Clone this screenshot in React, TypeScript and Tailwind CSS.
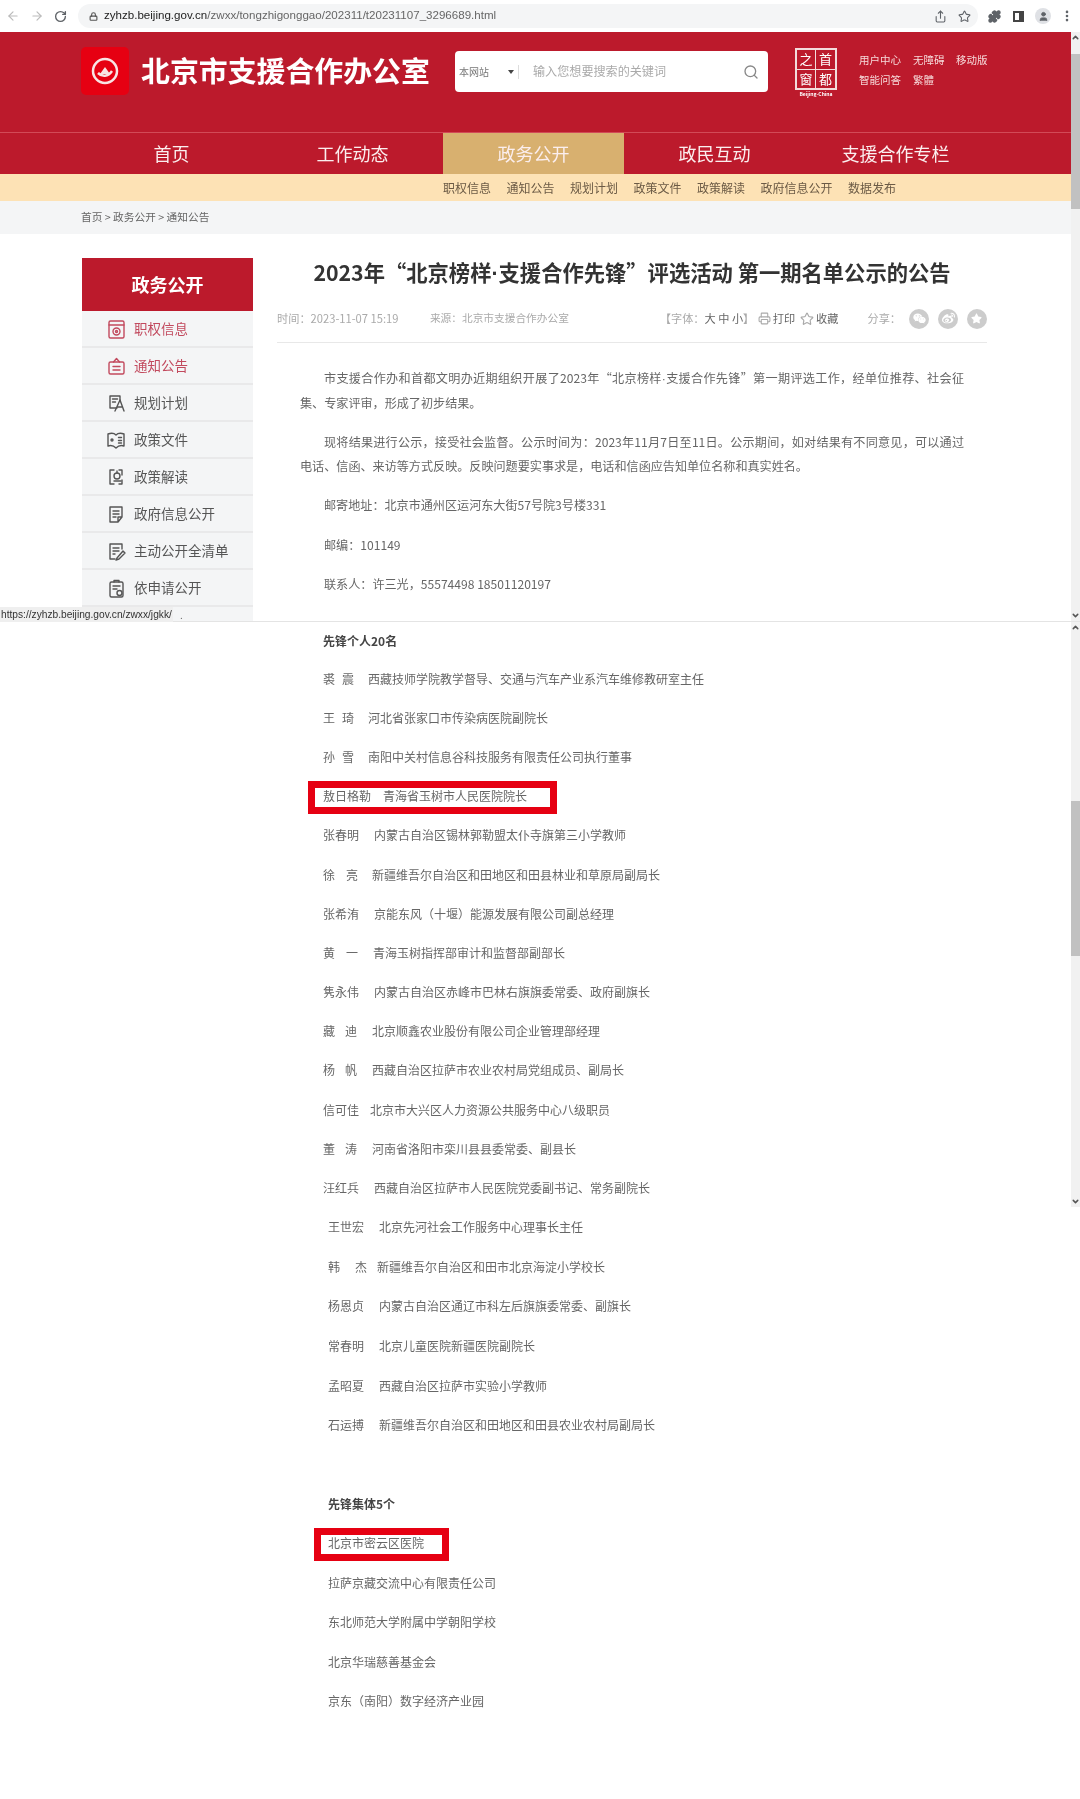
import React from "react";
import { ArrowLeft, ArrowRight, RotateCw, Lock, Share, Star, Puzzle, User, MoreVertical, Search, Printer, ChevronUp, ChevronDown } from "lucide-react";
import { FaWeixin, FaWeibo, FaStar } from "react-icons/fa";

const nav = ["首页", "工作动态", "政务公开", "政民互动", "支援合作专栏"];
const sub = ["职权信息", "通知公告", "规划计划", "政策文件", "政策解读", "政府信息公开", "数据发布"];

const Ico = ({ k }: { k: number }) => {
  const p = { fill: "none", stroke: "currentColor", strokeWidth: 1.4, strokeLinejoin: "round" as const, strokeLinecap: "round" as const };
  return (
    <svg width="20" height="20" viewBox="0 0 20 20" {...p}>
      {k === 0 && (<><rect x="3" y="2" width="15" height="17" rx="1.5" /><path d="M3 6h15" /><circle cx="10.5" cy="12.5" r="3.5" /><circle cx="10.5" cy="12.5" r="1" /></>)}
      {k === 1 && (<><rect x="3" y="6" width="15" height="12" rx="1.5" /><path d="M7.5 6 10.5 2.5 13.500 6M7 10.500h7M7 14h7" /></>)}
      {k === 2 && (<><path d="M11 15H4V3h10v5M6.500 6h5M6.500 9h3" /><path d="M9 18l5-11 4 11M11 14h5" /></>)}
      {k === 3 && (<><path d="M2 4c3-1 6-1 8 1 2-2 5-2 8-1v12c-3-1-6 0-8 2-2-2-5-3-8-2z" /><circle cx="6" cy="10" r="1" /><path d="M12.500 7.500h3M12.500 10.500h3M12.500 13h3" /></>)}
      {k === 4 && (<><path d="M8 3H4v14h4M13 3h3v5M16 13v4h-3" /><circle cx="11" cy="9" r="3" /><path d="M8 14h7M11 6V4" /></>)}
      {k === 5 && (<><path d="M16 13V3H4v15h8zM16 13h-4v5" /><path d="M7 7h6M7 10h6M7 13h3" /></>)}
      {k === 6 && (<><path d="M16 8V3H4v15h5" /><path d="M7 7h6M7 10h6M7 13h2" /><path d="M11 17l6-7 2 2-6 6-3 1z" /></>)}
      {k === 7 && (<><rect x="4" y="4" width="13" height="15" rx="1.500" /><path d="M8 4V2.500h5V4M7 8h7M7 11h4" /><circle cx="13.500" cy="15" r="2.500" /></>)}
    </svg>
  );
};

const side = ["职权信息", "通知公告", "规划计划", "政策文件", "政策解读", "政府信息公开", "主动公开全清单", "依申请公开", ""];

type P = { n: string[]; g?: number; w: number; r: string; box?: boolean };
const group1: P[] = [
  { n: ["裘", "震"], g: 7, w: 45, r: "西藏技师学院教学督导、交通与汽车产业系汽车维修教研室主任" },
  { n: ["王", "琦"], g: 7, w: 45, r: "河北省张家口市传染病医院副院长" },
  { n: ["孙", "雪"], g: 7, w: 45, r: "南阳中关村信息谷科技服务有限责任公司执行董事" },
  { n: ["敖日格勒"], w: 60, r: "青海省玉树市人民医院院长", box: true },
  { n: ["张春明"], w: 51, r: "内蒙古自治区锡林郭勒盟太仆寺旗第三小学教师" },
  { n: ["徐", "亮"], g: 11, w: 49, r: "新疆维吾尔自治区和田地区和田县林业和草原局副局长" },
  { n: ["张希洧"], w: 51, r: "京能东风（十堰）能源发展有限公司副总经理" },
  { n: ["黄", "一"], g: 11, w: 50, r: "青海玉树指挥部审计和监督部副部长" },
  { n: ["隽永伟"], w: 51, r: "内蒙古自治区赤峰市巴林右旗旗委常委、政府副旗长" },
  { n: ["藏", "迪"], g: 10, w: 49, r: "北京顺鑫农业股份有限公司企业管理部经理" },
  { n: ["杨", "帆"], g: 10, w: 49, r: "西藏自治区拉萨市农业农村局党组成员、副局长" },
  { n: ["信可佳"], w: 47, r: "北京市大兴区人力资源公共服务中心八级职员" },
  { n: ["董", "涛"], g: 10, w: 49, r: "河南省洛阳市栾川县县委常委、副县长" },
  { n: ["汪红兵"], w: 51, r: "西藏自治区拉萨市人民医院党委副书记、常务副院长" },
];
const group2: P[] = [
  { n: ["王世宏"], w: 51, r: "北京先河社会工作服务中心理事长主任" },
  { n: ["韩", "杰"], g: 15, w: 49, r: "新疆维吾尔自治区和田市北京海淀小学校长" },
  { n: ["杨恩贞"], w: 51, r: "内蒙古自治区通辽市科左后旗旗委常委、副旗长" },
  { n: ["常春明"], w: 51, r: "北京儿童医院新疆医院副院长" },
  { n: ["孟昭夏"], w: 51, r: "西藏自治区拉萨市实验小学教师" },
  { n: ["石运搏"], w: 51, r: "新疆维吾尔自治区和田地区和田县农业农村局副局长" },
];
const orgs = ["拉萨京藏交流中心有限责任公司", "东北师范大学附属中学朝阳学校", "北京华瑞慈善基金会", "京东（南阳）数字经济产业园"];

const Dot = () => <span style={{ fontFamily: '"Liberation Sans", sans-serif' }}>·</span>;

const Row = ({ p }: { p: P }) => (
  <div className="relative flex items-center h-[39.2px]">
    <span className="flex shrink-0" style={{ width: p.w, gap: p.g }}>
      {p.n.map((c) => (<span key={c}>{c}</span>))}
    </span>
    <span>{p.r}</span>
    {p.box && <span className="absolute -left-[15px] top-[4px] w-[249px] h-[33px] border-[7px] border-[#e60012]" />}
  </div>
);

const Bar = ({ thumb, top }: { thumb: number; top: number }) => (
  <div className="w-[9px] h-full bg-[#f1f1f1] flex flex-col items-center text-[#555]">
    <ChevronUp size={9} strokeWidth={4} className="mt-[1px]" />
    <div className="w-full bg-[#c1c1c1]" style={{ height: thumb, marginTop: top }} />
    <ChevronDown size={9} strokeWidth={4} className="mt-auto mb-[1px]" />
  </div>
);

export default function App() {
  return (
    <div className="relative w-[1080px] h-[1799px] overflow-hidden bg-white text-[12px] text-[#666] blur-[0.5px]" style={{ fontFamily: '"Noto Sans CJK SC", "Noto Sans", sans-serif' }}>
      {/* browser bar */}
      <div className="h-[32px] flex items-center bg-white text-[#5f6368]">
        <ArrowLeft size={14} className="ml-[6px] text-[#bbb]" />
        <ArrowRight size={14} className="ml-[10px] text-[#bbb]" />
        <RotateCw size={13} className="ml-[10px]" strokeWidth={2.5} />
        <div className="ml-[11px] flex items-center w-[900px] h-[24px] rounded-full bg-[#f4f5f6] pl-[11px] pr-[7px]">
          <Lock size={9} strokeWidth={3} className="text-[#555]" />
          <span className="ml-[6px] text-[11.570px] text-[#666]" style={{ fontFamily: '"Liberation Sans", sans-serif' }}>
            <span className="text-[#222]">zyhzb.beijing.gov.cn</span>/zwxx/tongzhigonggao/202311/t20231107_3296689.html
          </span>
          <Share size={13} className="ml-auto" />
          <Star size={13} className="ml-[11px]" />
        </div>
        <Puzzle size={13} strokeWidth={3} fill="currentColor" className="ml-[10px]" />
        <span className="ml-[12px] w-[11px] h-[11px] border-2 border-[#444] border-r-[5px]" />
        <span className="ml-[11px] w-[16px] h-[16px] rounded-full bg-[#dfe1e5] flex items-center justify-center"><User size={11} fill="currentColor" /></span>
        <MoreVertical size={14} strokeWidth={2.500} className="ml-[9px]" />
      </div>

      {/* first viewport */}
      <div className="flex h-[590px] border-b border-[#e4e4e4]">
        <div className="w-[1071px] overflow-hidden">
          <div className="h-[101px] bg-[#bc1a2c] flex pl-[81px] border-b border-[#d24a57]">
            <div className="mt-[15px] w-[48px] h-[48px] rounded-[5px] bg-[#e60012] flex items-center justify-center">
              <svg width="28" height="28" viewBox="0 0 28 28" fill="none" stroke="#f8e4e4" strokeWidth="2.500">
                <circle cx="14" cy="14" r="12" />
                <path d="M7 16c4 4 10 4 14-2" />
                <path d="M9 17l5-7 5 7z" fill="#f8e4e4" stroke="none" />
              </svg>
            </div>
            <div className="ml-[12px] mt-[17px] w-[288px] text-[28.9px] leading-[40px] font-bold text-white whitespace-nowrap">北京市支援合作办公室</div>
            <div className="ml-[26px] mt-[19px] w-[313px] h-[41px] rounded-[4px] bg-white flex items-center text-[10px] text-[#777]">
              <span className="ml-[4px]">本网站</span>
              <span className="ml-[19px] w-0 h-0 border-x-[3px] border-x-transparent border-t-[4px] border-t-[#444]" />
              <span className="ml-[4px] w-px h-[14px] bg-[#ddd]" />
              <span className="ml-[14px] text-[12.100px] text-[#aaa]">输入您想要搜索的关键词</span>
              <Search size={16} className="ml-auto mr-[9px] text-[#888]" />
            </div>
            <div className="ml-[27px] mt-[16px] w-[42px] text-white">
              <div className="grid grid-cols-2 w-[42px] h-[42px] border-2 border-[#f3dcdc] text-[13px] leading-[18px] text-center">
                <span className="border-r border-b border-[#f3dcdc]">之</span>
                <span className="border-b border-[#f3dcdc]">首</span>
                <span className="border-r border-[#f3dcdc]">窗</span>
                <span>都</span>
              </div>
              <div className="text-[5px] leading-[7px] text-center font-bold whitespace-nowrap">Beijing-China</div>
            </div>
            <div className="ml-[22px] mt-[18px] self-start text-[10.500px] leading-[20px] text-[#f6d9d9] grid grid-cols-[54px_43px_auto]">
              <span>用户中心</span><span>无障碍</span><span>移动版</span>
              <span>智能问答</span><span>繁體</span>
            </div>
          </div>
          <div className="h-[41px] bg-[#bc1a2c] flex pl-[81px]">
            {nav.map((n, i) => (
              <div key={n} className={`w-[181px] flex items-center justify-center text-[18px] text-[#fbeeee] ${i === 2 ? "bg-[#d8b06f]" : ""}`}>{n}</div>
            ))}
          </div>
          <div className="h-[27px] bg-[#fde2b5] flex items-center pl-[443px] gap-[15.500px] text-[12px] text-[#6b5a45]">
            {sub.map((s) => (<span key={s}>{s}</span>))}
          </div>
          <div className="h-[33px] bg-[#f4f5f6] flex items-center pl-[81px] text-[10.700px] text-[#666]">首页 &gt; 政务公开 &gt; 通知公告</div>

          <div className="flex pl-[82px] pt-[24px]">
            <div className="w-[171px] shrink-0">
              <div className="h-[53px] bg-[#bc1a2c] flex items-center justify-center text-[18px] font-bold text-white">政务公开</div>
              {side.map((s, i) => (
                <div key={i} className={`h-[37px] flex items-center bg-[#f4f5f6] border-b-2 border-[#e9e9ea] pl-[24px] text-[13.500px] ${i < 2 ? "text-[#c24a5e]" : "text-[#555]"}`}>
                  {s && <Ico k={i} />}
                  <span className="ml-[8px]">{s}</span>
                </div>
              ))}
            </div>
            <div className="ml-[24px] w-[710px]">
              <h1 className="h-[29px] mt-[1px] flex items-center justify-center text-[21.300px] font-bold text-[#333] whitespace-nowrap"><span>2023年“北京榜样<Dot />支援合作先锋”评选活动 第一期名单公示的公告</span></h1>
              <div className="h-[41px] mt-[14px] flex items-center border-b border-[#e8e8e8] pb-[7px] text-[11.200px] text-[#aaa] whitespace-nowrap">
                <span className="w-[153px]">时间：2023-11-07 15:19</span>
                <span className="w-[230px] text-[10.700px]">来源：北京市支援合作办公室</span>
                <span className="w-[98px]">【字体：<span className="text-[#666]">大 中 小</span>】</span>
                <Printer size={13} />
                <span className="ml-[2px] text-[#666]">打印</span>
                <Star size={14} className="ml-[5px]" />
                <span className="ml-[2px] text-[#666]">收藏</span>
                <span className="ml-[29px]">分享：</span>
                <span className="ml-[8px] w-[20px] h-[20px] rounded-full bg-[#ccc] flex items-center justify-center text-white"><FaWeixin size={13} /></span>
                <span className="ml-[9px] w-[20px] h-[20px] rounded-full bg-[#ccc] flex items-center justify-center text-white"><FaWeibo size={13} /></span>
                <span className="ml-[9px] w-[20px] h-[20px] rounded-full bg-[#ccc] flex items-center justify-center text-white"><FaStar size={11} /></span>
              </div>
              <div className="pl-[23px] w-[687px] pt-[23px] text-[12.100px] leading-[24px]">
                <p className="mb-[15px]">
                  <span className="block indent-[24px] text-justify [text-align-last:justify]">市支援合作办和首都文明办近期组织开展了2023年“北京榜样<Dot />支援合作先锋”第一期评选工作，经单位推荐、社会征</span>
                  集、专家评审，形成了初步结果。
                </p>
                <p className="mb-[15px]">
                  <span className="block indent-[24px] text-justify [text-align-last:justify]">现将结果进行公示，接受社会监督。公示时间为：2023年11月7日至11日。公示期间，如对结果有不同意见，可以通过</span>
                  电话、信函、来访等方式反映。反映问题要实事求是，电话和信函应告知单位名称和真实姓名。
                </p>
                <p className="indent-[24px] mb-[15.500px]">邮寄地址：北京市通州区运河东大街57号院3号楼331</p>
                <p className="indent-[24px] mb-[15.500px]">邮编：101149</p>
                <p className="indent-[24px]">联系人：许三光，55574498 18501120197</p>
              </div>
            </div>
          </div>
        </div>
        <Bar thumb={155} top={12} />
      </div>

      {/* status tooltip */}
      <div className="absolute left-0 top-[607px] h-[15px] w-[173px] bg-[#efefef] text-[10.200px] leading-[15px] pl-[1px] text-[#333] whitespace-nowrap" style={{ fontFamily: '"Liberation Sans", sans-serif' }}>https://zyhzb.beijing.gov.cn/zwxx/jgkk/</div>
      <span className="absolute left-[180px] top-[607px] text-[10px] leading-[15px]">.</span>

      {/* second viewport */}
      <div className="flex">
        <div className="w-[1071px] h-[1176px]">
          <div className="pl-[323px] text-[12px] whitespace-nowrap">
            <div className="h-[37px] flex items-center font-bold text-[#444]">先锋个人20名</div>
            {group1.map((p) => (<Row key={p.r} p={p} />))}
          </div>
          <div className="pl-[328px] text-[12px] whitespace-nowrap">
            {group2.map((p) => (<div key={p.r} className="h-[39.600px]"><Row p={p} /></div>))}
            <div className="h-[39.500px] mt-[39px] flex items-center font-bold text-[#444]">先锋集体5个</div>
            <div className="relative h-[39.500px] flex items-center">
              北京市密云区医院
              <span className="absolute -left-[14px] top-[4px] w-[135px] h-[33px] border-[7px] border-[#e60012]" />
            </div>
            {orgs.map((o) => (<div key={o} className="h-[39.500px] flex items-center">{o}</div>))}
          </div>
        </div>
        <div className="h-[585px]"><Bar thumb={155} top={169} /></div>
      </div>
    </div>
  );
}
